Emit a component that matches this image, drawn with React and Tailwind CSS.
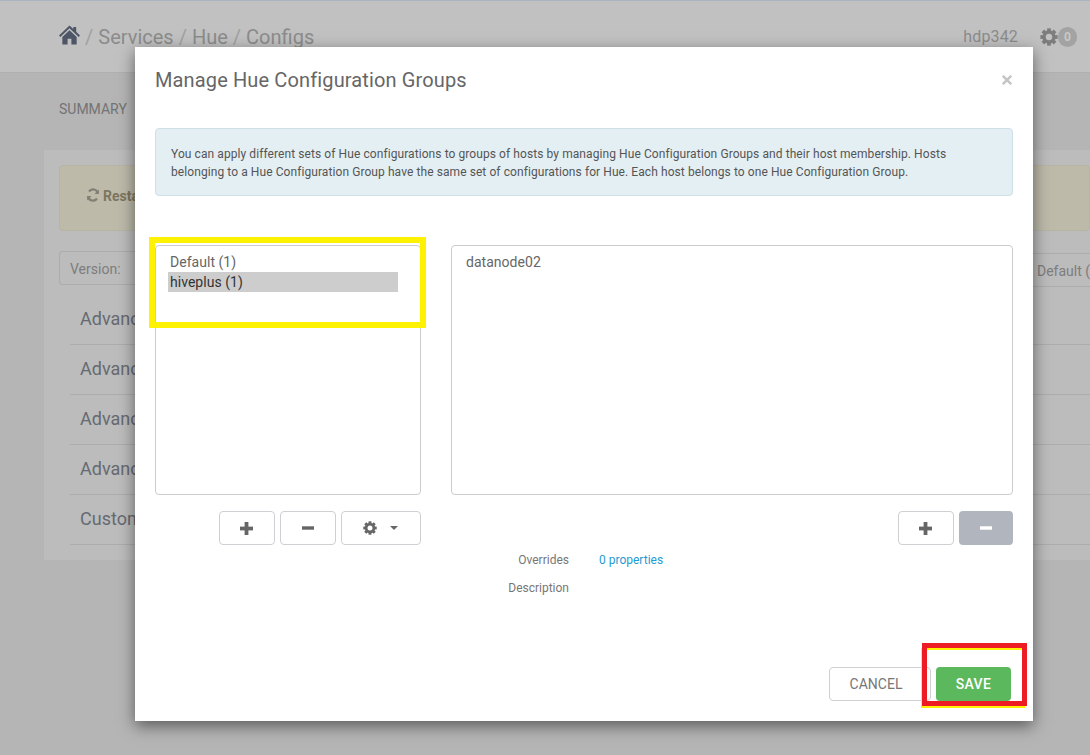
import React from "react";

const rows = ["Advanced", "Advanced", "Advanced", "Advanced", "Custom"];

function Gear({ size, className = "" }) {
  return (
    <svg width={size} height={size} viewBox="0 0 24 24" fill="currentColor" className={className}>
      {[0, 45, 90, 135, 180, 225, 270, 315].map((a) => (
        <rect key={a} x="9.5" y="0.5" width="5" height="6" transform={`rotate(${a} 12 12)`} />
      ))}
      <circle cx="12" cy="12" r="6.6" fill="none" stroke="currentColor" strokeWidth="4.6" />
    </svg>
  );
}

function Plus() {
  return (
    <svg width="13" height="13" viewBox="0 0 13 13" fill="currentColor">
      <rect x="4.6" y="0" width="3.8" height="13" />
      <rect x="0" y="4.6" width="13" height="3.8" />
    </svg>
  );
}

function Minus() {
  return (
    <svg width="12" height="4" viewBox="0 0 12 4" fill="currentColor">
      <rect x="0" y="0.3" width="12" height="3.4" />
    </svg>
  );
}

function IconBtn({ children, className = "" }) {
  return (
    <button className={"flex h-[34px] items-center justify-center rounded-[4px] border border-[#d0d0d4] bg-white text-[#666] " + className}>
      {children}
    </button>
  );
}

export default function App() {
  return (
    <div className="relative h-[755px] w-[1090px] overflow-hidden bg-[#b5b5b5] font-['Roboto',sans-serif]">
      {/* page behind the modal */}
      <header className="flex h-[73px] items-center justify-between border-t border-b border-t-[#aab4c0] border-b-[#b0b0b0] bg-[#c1c1c1] pl-[59px] pr-[13px]">
        <div className="flex items-center text-[20px] text-[#8c8c8c]">
          <svg width="21" height="20" viewBox="0 0 22 20" fill="currentColor" className="mr-[5px] -mt-[3px] text-[#4d5566]">
            <path d="M11 0 L0 10.5 L1.4 12 L11 3 L20.6 12 L22 10.5 L18 6.7 V1.5 H15 V3.8 Z" />
            <path d="M3.5 12.2 L11 5 L18.5 12.2 V20 H13 V14 H9 V20 H3.5 Z" />
          </svg>
          <span className="text-[#a0a0a0]">/</span>
          <span className="ml-[5px] mr-[5px]">Services</span>
          <span className="text-[#a0a0a0]">/</span>
          <span className="ml-[5px] mr-[5px]">Hue</span>
          <span className="text-[#a0a0a0]">/</span>
          <span className="ml-[5px]">Configs</span>
        </div>
        <div className="flex items-center">
          <span className="mr-[22px] text-[16px] tracking-[0.15px] text-[#8c8c8c]">hdp342</span>
          <Gear size={18} className="text-[#7d7d7d]" />
          <span className="flex h-[20px] w-[19px] items-center justify-center rounded-full bg-[#a3a3a3] text-[12px] font-bold text-[#c8c8c8]">0</span>
        </div>
      </header>
      <div className="flex h-[77px] items-start pl-[59px] pt-[26px] text-[14px] text-[#737373]">SUMMARY</div>
      <section className="ml-[44px] h-[410px] bg-[#bcbcbc] pt-[15px]">
        <div className="ml-[15px] flex h-[66px] items-start rounded-[4px] border border-[#b8b5a3] bg-[#bdbaaa] pl-[26px] pt-[20px] text-[14px] font-bold text-[#7d7660]">
          <svg width="14" height="14" viewBox="0 0 14 14" fill="none" stroke="#827f74" strokeWidth="2.2" className="mr-[3px] mt-[2px]">
            <path d="M12 5.5 A5 5 0 0 0 3 3.5" />
            <path d="M2 8.5 A5 5 0 0 0 11 10.5" />
            <path d="M12.8 1.5 V6 H8.5 Z M1.2 12.5 V8 H5.5 Z" fill="#827f74" stroke="none" />
          </svg>
          Restart
        </div>
        <div className="ml-[15px] mt-[20px] flex items-start justify-between">
          <div className="flex h-[34px] w-[300px] items-center rounded-l-[4px] border border-r-0 border-[#acacac] pl-[10px] pt-[3px] text-[14px] text-[#7d7d7d]">Version:</div>
          <div className="mt-[2px] flex h-[34px] w-[300px] items-center justify-end border-y border-[#acacac] pt-[3px] text-[14px] text-[#7d7d7d]">Default (</div>
        </div>
        <div className="ml-[26px] mt-[8px]">
          {rows.map((r, i) => (
            <div key={i} className="flex h-[50px] items-center border-b border-[#acacac] pb-[2px] pl-[10px] text-[18px] text-[#666a72]">
              {r}
            </div>
          ))}
        </div>
      </section>

      {/* modal */}
      <div className="absolute left-[135px] top-[47px] flex h-[674px] w-[898px] flex-col bg-white px-[20px] shadow-[0_5px_15px_rgba(0,0,0,0.5)]">
        <div className="flex h-[81px] items-start justify-between pt-[20px]">
          <h3 className="text-[20px] leading-[26px] tracking-[0.13px] text-[#666]">Manage Hue Configuration Groups</h3>
          <svg width="10" height="10" viewBox="0 0 10 10" stroke="#c4c4c4" strokeWidth="2.4" className="mr-[1px] mt-[8px]">
            <path d="M0.8 0.8 L9.2 9.2 M9.2 0.8 L0.8 9.2" />
          </svg>
        </div>
        <div className="h-[68px] rounded-[4px] border border-[#cfdfe6] bg-[#e4eff4] pl-[15px] pr-[30px] pt-[16px] text-[12px] leading-[18px] tracking-[0.08px] text-[#555]">
          You can apply different sets of Hue configurations to groups of hosts by managing Hue Configuration Groups and their host membership. Hosts belonging to a Hue Configuration Group have the same set of configurations for Hue. Each host belongs to one Hue Configuration Group.
        </div>
        <div className="mt-[49px] flex gap-[30px]">
          <div className="w-[266px]">
            <div className="h-[250px] rounded-[4px] border border-[#ccc] px-[12px] pt-[6px] text-[14px] leading-[20px] tracking-[0.03px] text-[#666]">
              <div className="pl-[2px]">Default (1)</div>
              <div className="w-[230px] bg-[#cdcdcd] pl-[2px] text-[#333]">hiveplus (1)</div>
            </div>
            <div className="mt-[16px] flex justify-end gap-[5px]">
              <IconBtn className="w-[56px] pr-[2px]"><Plus /></IconBtn>
              <IconBtn className="w-[56px]"><Minus /></IconBtn>
              <IconBtn className="w-[80px] gap-[13px] pr-[2px]">
                <Gear size={14} />
                <span className="h-0 w-0 border-x-[4px] border-t-[4px] border-x-transparent border-t-[#666]" />
              </IconBtn>
            </div>
          </div>
          <div className="flex-1">
            <div className="h-[250px] rounded-[4px] border border-[#ccc] px-[14px] pt-[6px] text-[14px] leading-[20px] tracking-[0.03px] text-[#666]">datanode02</div>
            <div className="mt-[16px] flex justify-end gap-[5px]">
              <IconBtn className="w-[56px] pr-[1px]"><Plus /></IconBtn>
              <button className="flex h-[34px] w-[54px] items-center justify-center rounded-[4px] bg-[#b1b5bd] text-white"><Minus /></button>
            </div>
          </div>
        </div>
        <div className="mt-[7px] grid grid-cols-[414px_1fr] gap-x-[30px] gap-y-[12px] text-[12px] leading-[16px] text-[#777]">
          <span className="text-right">Overrides</span>
          <span className="text-[#1f9bd1]">0 properties</span>
          <span className="text-right">Description</span>
          <span />
        </div>
        <div className="mt-auto flex justify-end gap-[5px] pb-[20px] pr-[2px]">
          <button className="h-[34px] w-[102px] rounded-[4px] border border-[#d0d0d4] bg-white pr-[8px] text-[14px] text-[#777]">CANCEL</button>
          <button className="h-[34px] w-[75px] rounded-[4px] bg-[#5cb85c] text-[14px] font-medium tracking-[0.3px] text-white">SAVE</button>
        </div>
      </div>

      {/* annotation rectangles drawn over the screenshot */}
      <div className="absolute left-[149px] top-[237px] h-[91px] w-[277px] border-[6px] border-[#fff200]" />
      <div className="absolute left-[921px] top-[648px] h-[60px] w-[104px] border-[2px] border-[#fff200]" />
      <div className="absolute left-[922px] top-[643px] h-[63px] w-[105px] border-[5px] border-[#ed1c24]" />
    </div>
  );
}
